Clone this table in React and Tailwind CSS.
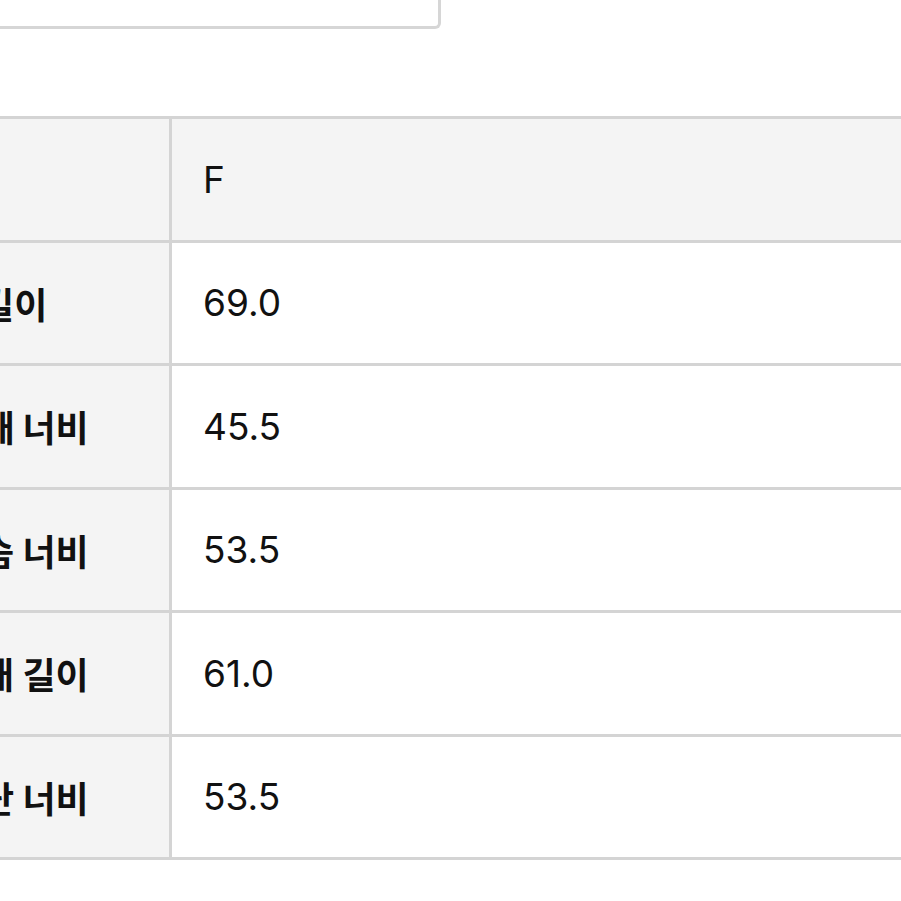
import React from 'react'

const rows = [
    { label: '총길이', value: '69.0' },
    { label: '어깨 너비', value: '45.5' },
    { label: '가슴 너비', value: '53.5' },
    { label: '소매 길이', value: '61.0' },
    { label: '밑단 너비', value: '53.5' },
]

const App = () => {
    return (
        <div className="w-[901px] h-[901px] overflow-hidden bg-white font-['Inter','Noto_Sans_CJK_KR',sans-serif] text-[#111]">
            {/* Box above (cut off) */}
            <div className="-ml-[20px] w-[461px] h-[29px] border-b-[3px] border-r-[3px] border-[#d6d6d6] rounded-br-[6px]"></div>

            {/* Size table */}
            <div className="mt-[87px] -ml-[90px] w-[1100px] border-t-[3px] border-[#d4d4d4]">
                <div className="flex h-[123.5px] border-b-[3px] border-[#d4d4d4] bg-[#f4f4f4]">
                    <div className="w-[262px] shrink-0 border-r-[3px] border-[#d4d4d4]"></div>
                    <div className="flex-1 flex items-center pl-[31px] text-[37px]">F</div>
                </div>
                {rows.map((row) => (
                    <div key={row.label} className="flex h-[123.5px] border-b-[3px] border-[#d4d4d4]">
                        <div className="w-[262px] shrink-0 flex items-center pl-[38px] bg-[#f4f4f4] border-r-[3px] border-[#d4d4d4] font-['Noto_Sans_CJK_KR',sans-serif] font-bold text-[36px] whitespace-nowrap">
                            {row.label}
                        </div>
                        <div className="flex-1 flex items-center pl-[31px] text-[37px] bg-white">{row.value}</div>
                    </div>
                ))}
            </div>
        </div>
    )
}

export default App
